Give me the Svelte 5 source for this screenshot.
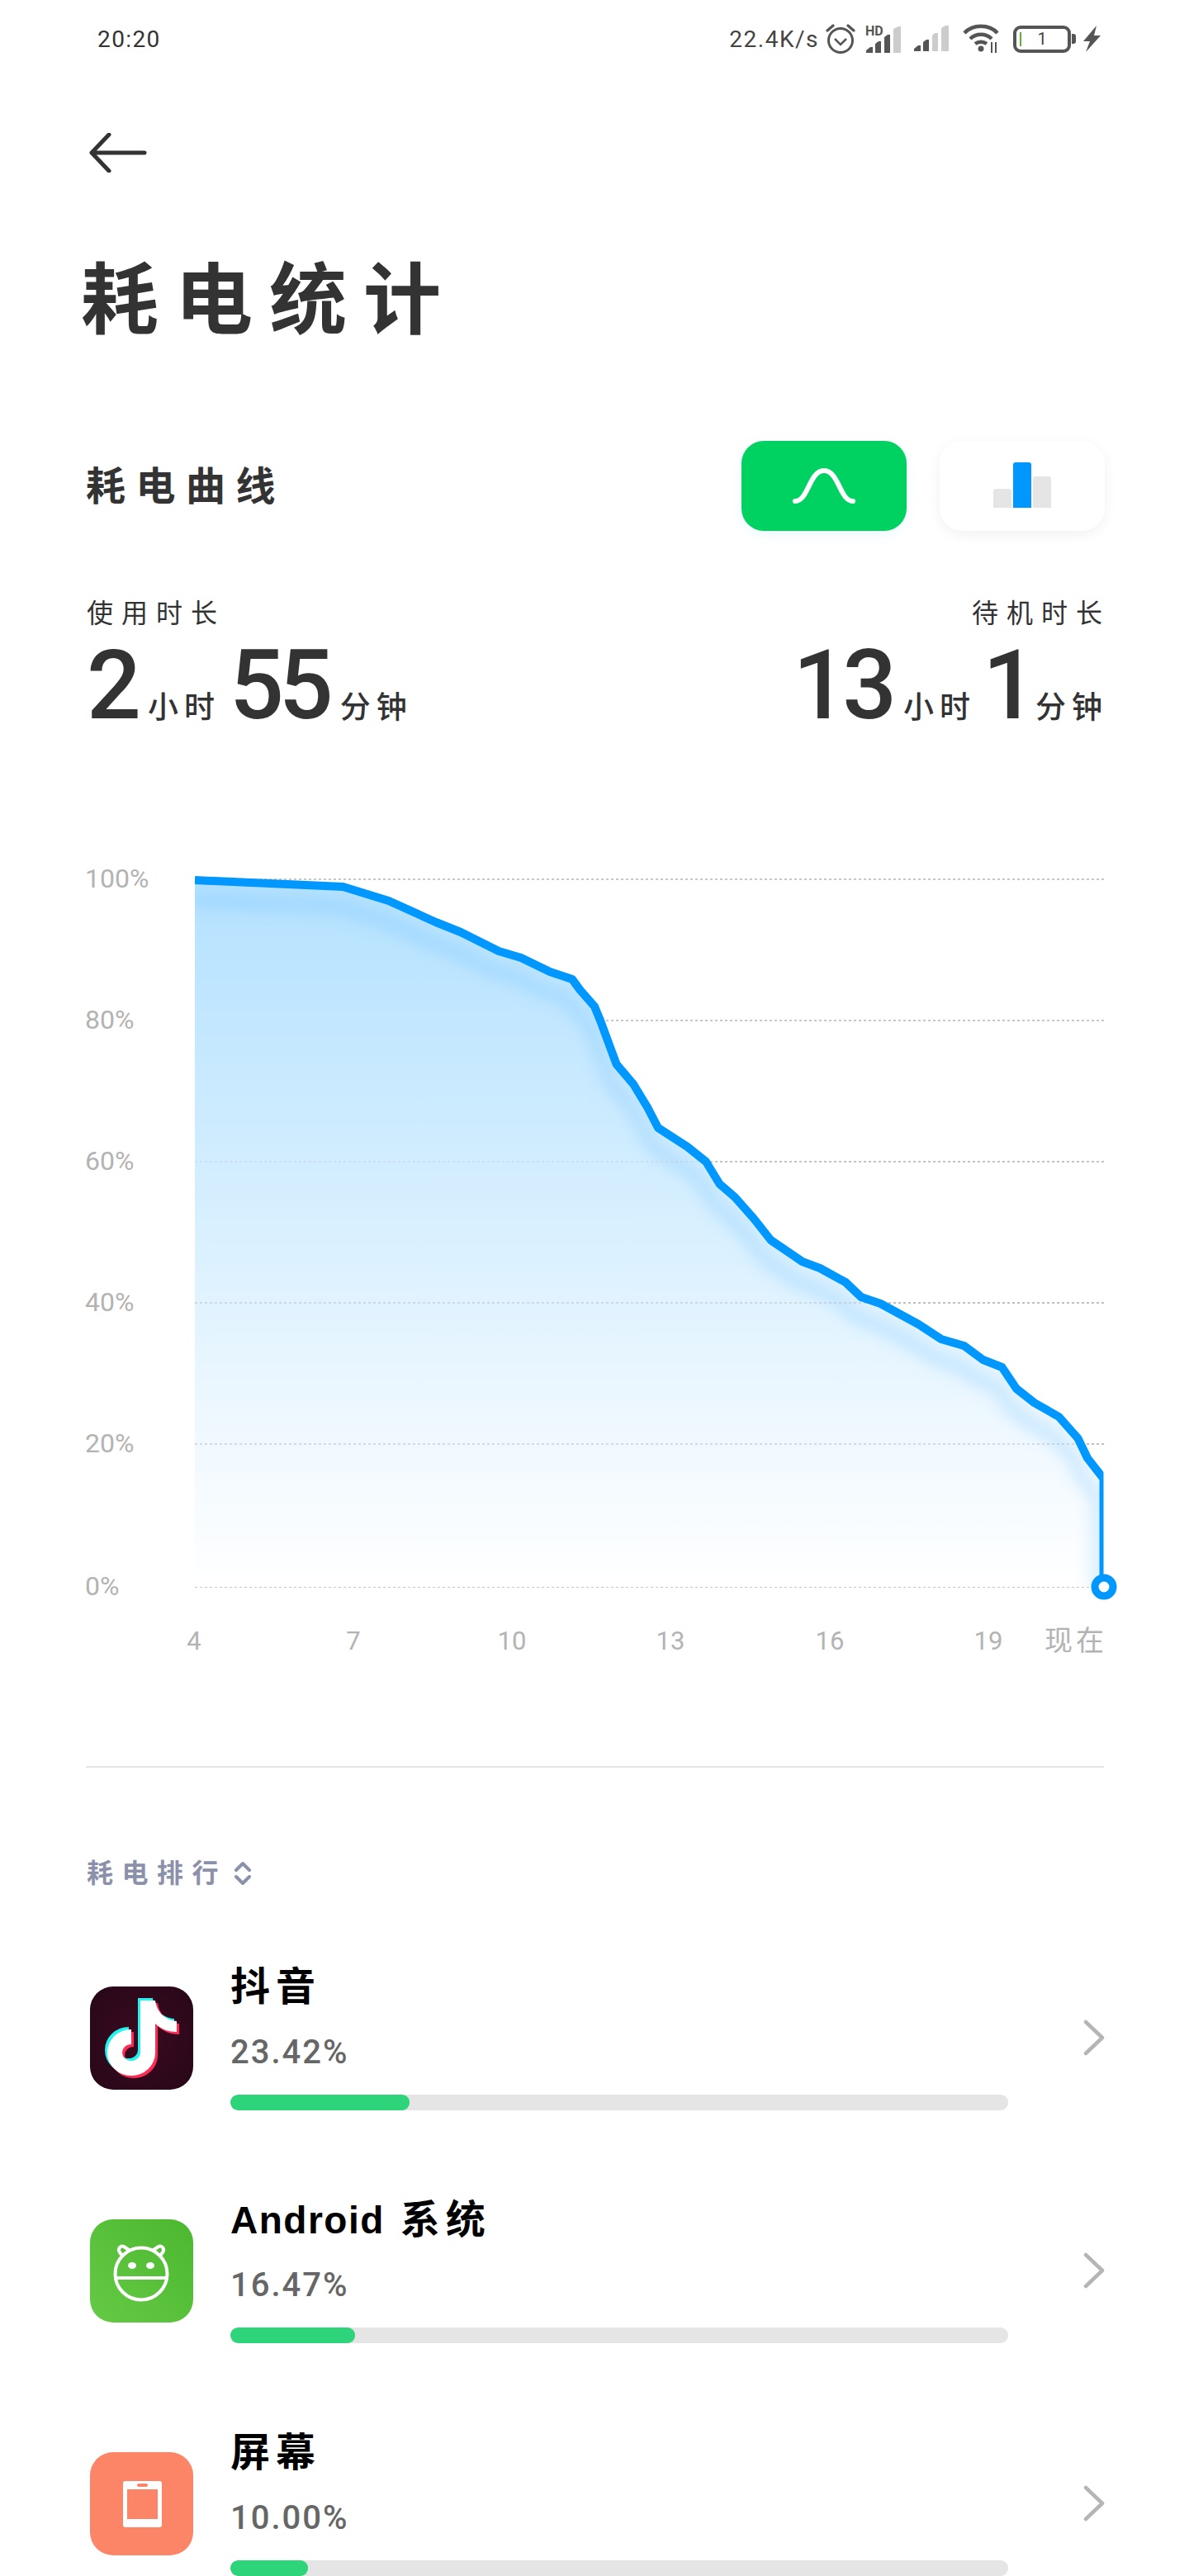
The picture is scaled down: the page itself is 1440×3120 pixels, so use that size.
<script>
  const line = [[236,1067],[415.5,1075],[470.6,1092],[528,1118],[558,1130],[604,1153],[631,1161],[666,1178],[693,1187],[702.5,1200],[720,1220],[727,1237],[746.6,1290],[767,1314],[784,1342],[797,1367],[832.5,1390],[855,1408],[871.5,1435],[890,1451],[913,1477],[933.5,1503],[971.6,1529],[993,1537],[1024,1554],[1043,1572],[1066.6,1580],[1112.5,1605],[1140,1623],[1167.6,1631],[1190.6,1648],[1213.6,1657],[1231,1683],[1252.6,1700],[1282.4,1717],[1305.4,1743],[1317,1767],[1336.5,1792],[1336.5,1923]];
  const linePts = line.map((p) => p.join(',')).join(' ');
  const areaPts = linePts + ' 236,1923';
  const grid = [
    { y: 1066, label: '100%' },
    { y: 1237, label: '80%' },
    { y: 1408, label: '60%' },
    { y: 1579, label: '40%' },
    { y: 1750, label: '20%' },
    { y: 1923, label: '0%' }
  ];
  const xLabels = [['4',235],['7',428],['10',620],['13',812],['16',1005],['19',1197]];
  const apps = [
    { latin: '', cjk: '抖音', pct: '23.42%', width: 23, icon: 'tiktok' },
    { latin: 'Android', cjk: '系统', pct: '16.47%', width: 16, icon: 'android' },
    { latin: '', cjk: '屏幕', pct: '10.00%', width: 10, icon: 'screen' }
  ];
  const note = [
    { dx: -3, dy: -3, color: '#25f4ee' },
    { dx: 3, dy: 3, color: '#fe2c55' },
    { dx: 0, dy: 0, color: '#ffffff' }
  ];
</script>

<div class="page">
  <header class="status">
    <span class="time">20:20</span>
    <div class="status-right">
      <span class="speed">22.4K/s</span>
      <svg class="s-alarm" width="36" height="38" viewBox="0 0 36 38" fill="none" stroke="#555">
        <circle cx="18" cy="21" r="14.5" stroke-width="3"/>
        <path d="M11 19l7 7 7-7" stroke-width="2.5"/>
        <path d="M2 9l7-6M34 9l-7-6" stroke-width="3.2" stroke-linecap="round"/>
      </svg>
      <svg class="s-sig1" width="44" height="36" viewBox="0 0 44 36">
        <text x="0" y="14" class="hd">HD</text>
        <path d="M1 35v-3l5-4h3v7zM12 35V24l4-3h3v14zM23 35V16l4-3h3v22z" fill="#555"/>
        <path d="M34 35V6l6-3h3v32z" fill="#ccc"/>
      </svg>
      <svg class="s-sig2" width="44" height="32" viewBox="0 0 44 32">
        <path d="M1 31v-3l5-4h3v7zM12 31V20l4-3h3v14z" fill="#555"/>
        <path d="M23 31V12l3-3h4v22z" fill="#ccc" />
        <path d="M34 31V3l5-3h4v31z" fill="#ccc"/>
      </svg>
      <svg class="s-wifi" width="44" height="36" viewBox="0 0 44 36" fill="none" stroke="#555" stroke-width="4.5">
        <path d="M2 11C12 0 32 0 42 11"/>
        <path d="M9 18c7-7 19-7 26 0"/>
        <path d="M15 24c4-3 10-3 14 0"/>
        <circle cx="22" cy="30" r="3.5" fill="#555" stroke="none"/>
        <path d="M35 22v13M40 35V22" stroke-width="2" />
      </svg>
      <div class="battery">
        <span class="batt-level"></span>
        <span class="batt-num">1</span>
      </div>
      <span class="batt-tip"></span>
      <svg class="s-bolt" width="22" height="32" viewBox="0 0 22 32">
        <path d="M16 0L0 19h8L3 32 21 12h-8z" fill="#555"/>
      </svg>
    </div>
  </header>

  <button class="back" aria-label="返回">
    <svg width="70" height="48" viewBox="0 0 70 48" fill="none" stroke="#333" stroke-width="5" stroke-linecap="round" stroke-linejoin="round">
      <path d="M24 2L3 24l21 22M3 24h64"/>
    </svg>
  </button>

  <h1 class="title">耗电统计</h1>

  <section class="curve-head">
    <h2 class="curve-title">耗电曲线</h2>
    <div class="toggles">
      <div class="toggle active">
        <svg width="76" height="44" viewBox="0 0 76 44" fill="none" stroke="#fff" stroke-width="6" stroke-linecap="round">
          <path d="M3 40c16 0 17-37 35-37s19 37 35 37"/>
        </svg>
      </div>
      <div class="toggle">
        <div class="bars">
          <span class="bar-a"></span>
          <span class="bar-b"></span>
          <span class="bar-c"></span>
        </div>
      </div>
    </div>
  </section>

  <section class="stats">
    <div class="stat">
      <div class="stat-label">使用时长</div>
      <div class="stat-value">
        <span class="num">2</span><span class="unit">小时</span>
        <span class="num">55</span><span class="unit">分钟</span>
      </div>
    </div>
    <div class="stat right">
      <div class="stat-label">待机时长</div>
      <div class="stat-value">
        <span class="num">13</span><span class="unit">小时</span>
        <span class="num tight">1</span><span class="unit">分钟</span>
      </div>
    </div>
  </section>

  <svg class="chart" width="1440" height="1000" viewBox="0 1040 1440 1000">
    <defs>
      <linearGradient id="areaFill" gradientUnits="userSpaceOnUse" x1="0" y1="1066" x2="0" y2="1923">
        <stop offset="0" stop-color="#b4e1ff"/>
        <stop offset="0.5" stop-color="#d9f0ff"/>
        <stop offset="0.8" stop-color="#f1f9ff"/>
        <stop offset="1" stop-color="#ffffff"/>
      </linearGradient>
      <clipPath id="areaClip"><polygon points={areaPts}/></clipPath>
      <clipPath id="lineClip"><rect x="236" y="1040" width="1100.5" height="1000"/></clipPath>
      <filter id="soft" x="-10%" y="-10%" width="120%" height="120%"><feGaussianBlur stdDeviation="9"/></filter>
    </defs>
    {#each grid as g}
      <line class="grid" x1="236" x2="1337" y1={g.y} y2={g.y}/>
      <text class="axis" x="103" y={g.y + 10}>{g.label}</text>
    {/each}
    <polygon points={areaPts} fill="url(#areaFill)"/>
    <g clip-path="url(#areaClip)">
      <polyline points={linePts} transform="translate(-6 24)" fill="none" stroke="#5cbcff" stroke-opacity="0.28" stroke-width="16" filter="url(#soft)"/>
    </g>
    <line class="grid" x1="236" x2="1337" y1="1750" y2="1750" opacity="0.6"/>
    <line class="grid" x1="236" x2="1337" y1="1579" y2="1579" opacity="0.6"/>
    <line class="grid" x1="236" x2="1337" y1="1408" y2="1408" opacity="0.3"/>
    <g clip-path="url(#lineClip)">
      <polyline points={linePts} fill="none" stroke="#0098ff" stroke-width="10" stroke-linejoin="round"/>
    </g>
    <circle cx="1337" cy="1923" r="11" fill="#fff" stroke="#0098ff" stroke-width="9"/>
    {#each xLabels as [t, x]}
      <text class="axis tick" x={x} y="1999">{t}</text>
    {/each}
    <text class="axis now" x="1341" y="2000">现在</text>
  </svg>

  <hr class="divider"/>

  <div class="rank-head">
    <span>耗电排行</span>
    <svg width="20" height="30" viewBox="0 0 20 30" fill="none" stroke="#8b90ab" stroke-width="4" stroke-linecap="round" stroke-linejoin="round">
      <path d="M2 11l8-8 8 8M2 19l8 8 8-8"/>
    </svg>
  </div>

  <ul class="apps">
    {#each apps as app}
      <li class="app">
        <div class="app-icon {app.icon}">
          {#if app.icon === 'tiktok'}
            <svg width="125" height="125" viewBox="0 0 125 125" fill="none">
              {#each note as n}
                <g transform="translate({n.dx} {n.dy})">
                  <path d="M70 17V80A20 19 0 1 1 50 61" stroke={n.color} stroke-width="18"/>
                  <path d="M61 17H79C81 31 91 41 105 42V55C93 55 84 50 79 45Z" fill={n.color}/>
                </g>
              {/each}
            </svg>
          {:else if app.icon === 'android'}
            <svg width="125" height="125" viewBox="0 0 125 125" fill="none" stroke="#fff" stroke-width="4">
              <circle cx="62" cy="66" r="31.5"/>
              <path d="M31 71H93"/>
              <ellipse cx="51" cy="56" rx="5" ry="4" fill="#fff" stroke="none"/>
              <ellipse cx="73" cy="56" rx="5" ry="4" fill="#fff" stroke="none"/>
              <path d="M47 37l-6-4c-4-2-8 3-5 7l3 4M77 37l6-4c4-2 8 3 5 7l-3 4" stroke-linecap="round"/>
            </svg>
          {:else}
            <svg width="125" height="125" viewBox="0 0 125 125">
              <rect x="40" y="35" width="47" height="56" rx="3" fill="#fff"/>
              <rect x="45" y="45" width="37" height="36" fill="#fc8568"/>
              <rect x="57" y="38" width="13" height="4" rx="2" fill="#fc8568"/>
            </svg>
          {/if}
        </div>
        <div class="app-body">
          <div class="app-name">{#if app.latin}<span class="latin">{app.latin}</span>{/if}{app.cjk}</div>
          <div class="app-pct">{app.pct}</div>
          <div class="track"><div class="fill" style="width: {app.width}%"></div></div>
        </div>
        <svg class="chev" width="26" height="44" viewBox="0 0 26 44" fill="none" stroke="#b5b5b5" stroke-width="4.5" stroke-linecap="round" stroke-linejoin="round">
          <path d="M3 3l20 19L3 41"/>
        </svg>
      </li>
    {/each}
  </ul>
</div>

<style>
  :global(body) { margin: 0; background: #fff; }
  .page {
    width: 1440px;
    height: 3120px;
    overflow: hidden;
    background: #fff;
    color: #333;
    font-family: Roboto, "Noto Sans CJK SC", sans-serif;
  }
  .status {
    height: 94px;
    display: flex;
    align-items: center;
    justify-content: space-between;
    padding: 0 106px 0 118px;
  }
  .time { font-size: 28px; letter-spacing: 1.4px; color: #333; }
  .status-right { display: flex; align-items: center; height: 40px; position: relative; }
  .status-right svg { overflow: visible; }
  .speed { font-size: 28px; letter-spacing: 1.5px; color: #444; margin-right: 8px; }
  .s-alarm { margin-right: 12px; }
  .s-sig1 { margin-right: 14px; }
  .s-sig2 { margin-right: 16px; }
  .s-wifi { margin-right: 17px; }
  .hd { font: 700 16px Roboto, sans-serif; fill: #555; }
  .battery {
    box-sizing: border-box;
    width: 70px;
    height: 33px;
    border: 4px solid #555;
    border-radius: 9px;
    display: flex;
    align-items: center;
    justify-content: center;
    position: relative;
  }
  .batt-level { position: absolute; left: 4px; top: 4px; bottom: 4px; width: 1.5px; background: #5cb531; }
  .batt-num { font-size: 20px; color: #444; line-height: 1; }
  .batt-tip { width: 5px; height: 12px; background: #555; border-radius: 0 3px 3px 0; margin: 0 9px 0 1px; }
  .back {
    display: block;
    margin: 67px 0 0 108px;
    padding: 0;
    border: 0;
    background: none;
    line-height: 0;
  }
  .title {
    margin: 106px 0 0 98px;
    font-size: 94px;
    line-height: 100px;
    font-weight: 700;
    letter-spacing: 20px;
    color: #333;
  }
  .curve-head {
    display: flex;
    align-items: center;
    justify-content: space-between;
    margin-top: 119px;
    padding: 0 102px 0 104px;
  }
  .curve-title {
    margin: -8px 0 0;
    font-size: 48px;
    font-weight: 700;
    letter-spacing: 12.5px;
    color: #333;
  }
  .toggles { display: flex; gap: 40px; }
  .toggle {
    width: 200px;
    height: 109px;
    border-radius: 27px;
    background: #fff;
    box-shadow: 0 4px 16px rgba(0, 0, 0, 0.06);
    display: flex;
    align-items: center;
    justify-content: center;
  }
  .toggle.active { background: #00d261; box-shadow: 0 4px 16px rgba(0, 170, 255, 0.08); }
  .bars { display: flex; align-items: flex-end; gap: 2px; height: 55px; margin-top: -2px; }
  .bars span { display: block; width: 22px; background: #e5e5e5; border-radius: 3px 3px 0 0; }
  .bar-a { height: 23px; }
  .bars .bar-b { height: 55px; background: #0098ff; }
  .bar-c { height: 38px; }
  .stats {
    display: flex;
    justify-content: space-between;
    margin-top: 80px;
    padding: 0 104px 0 105px;
  }
  .stat-label {
    font-size: 32px;
    line-height: 40px;
    letter-spacing: 10px;
    color: #333;
  }
  .stat-value { display: flex; align-items: baseline; margin-top: 12px; }
  .stat.right .stat-label { text-align: right; margin-right: -9px; }
  .stat.right .stat-value { justify-content: flex-end; }
  .num {
    font-size: 116px;
    line-height: 110px;
    font-weight: 500;
    letter-spacing: -6px;
    color: #333;
  }
  .num.tight { letter-spacing: -16px; }
  .unit {
    font-size: 37px;
    letter-spacing: 7px;
    margin: 0 11px 0 14px;
    color: #333;
    font-weight: 500;
  }
  .right .unit { margin-right: 8px; }
  .stat-value .unit:last-child { margin-right: -6px; }
  .chart { display: block; margin-top: 154px; }
  .grid { stroke: #b5b5b5; stroke-width: 1.5; stroke-dasharray: 3 3; }
  .axis { font: 400 32px Roboto, "Noto Sans CJK SC", sans-serif; fill: #b3b3b3; }
  .tick { text-anchor: middle; font-size: 31px; }
  .now { text-anchor: end; letter-spacing: 4px; font-size: 34px; }
  .divider {
    margin: 100px 103px 0 104px;
    border: 0;
    height: 2px;
    background: #e5e5e5;
  }
  .rank-head {
    display: flex;
    align-items: center;
    gap: 9px;
    margin: 108px 0 0 105px;
    color: #8b90ab;
    font-size: 32px;
    line-height: 40px;
    letter-spacing: 10.5px;
    font-weight: 700;
  }
  .apps { list-style: none; margin: 38px 0 0; padding: 0; }
  .app {
    display: grid;
    grid-template-columns: 125px 942px 1fr;
    column-gap: 45px;
    align-items: center;
    height: 282px;
    padding: 0 102px 0 109px;
  }
  .app-icon { width: 125px; height: 125px; border-radius: 28px; overflow: hidden; line-height: 0; }
  .tiktok { background: radial-gradient(circle at 50% 50%, #3c0a20, #260718); }
  .android { background: linear-gradient(45deg, #65ca45, #4bb72f); }
  .screen { background: #fc8568; }
  .app-name {
    font-size: 48px;
    line-height: 52px;
    letter-spacing: 7px;
    color: #000;
    font-weight: 700;
  }
  .latin {
    font-family: "Liberation Sans", sans-serif;
    font-size: 46px;
    letter-spacing: 1.5px;
    margin-right: 19px;
  }
  .app-pct {
    margin-top: 30px;
    font-size: 40px;
    line-height: 46px;
    letter-spacing: 2px;
    color: #666;
    font-weight: 500;
  }
  .track { margin-top: 28px; height: 19px; border-radius: 9px; background: #e5e5e5; overflow: hidden; }
  .fill { height: 100%; border-radius: 9px; background: #2ed47a; }
  .chev { justify-self: end; }
</style>
